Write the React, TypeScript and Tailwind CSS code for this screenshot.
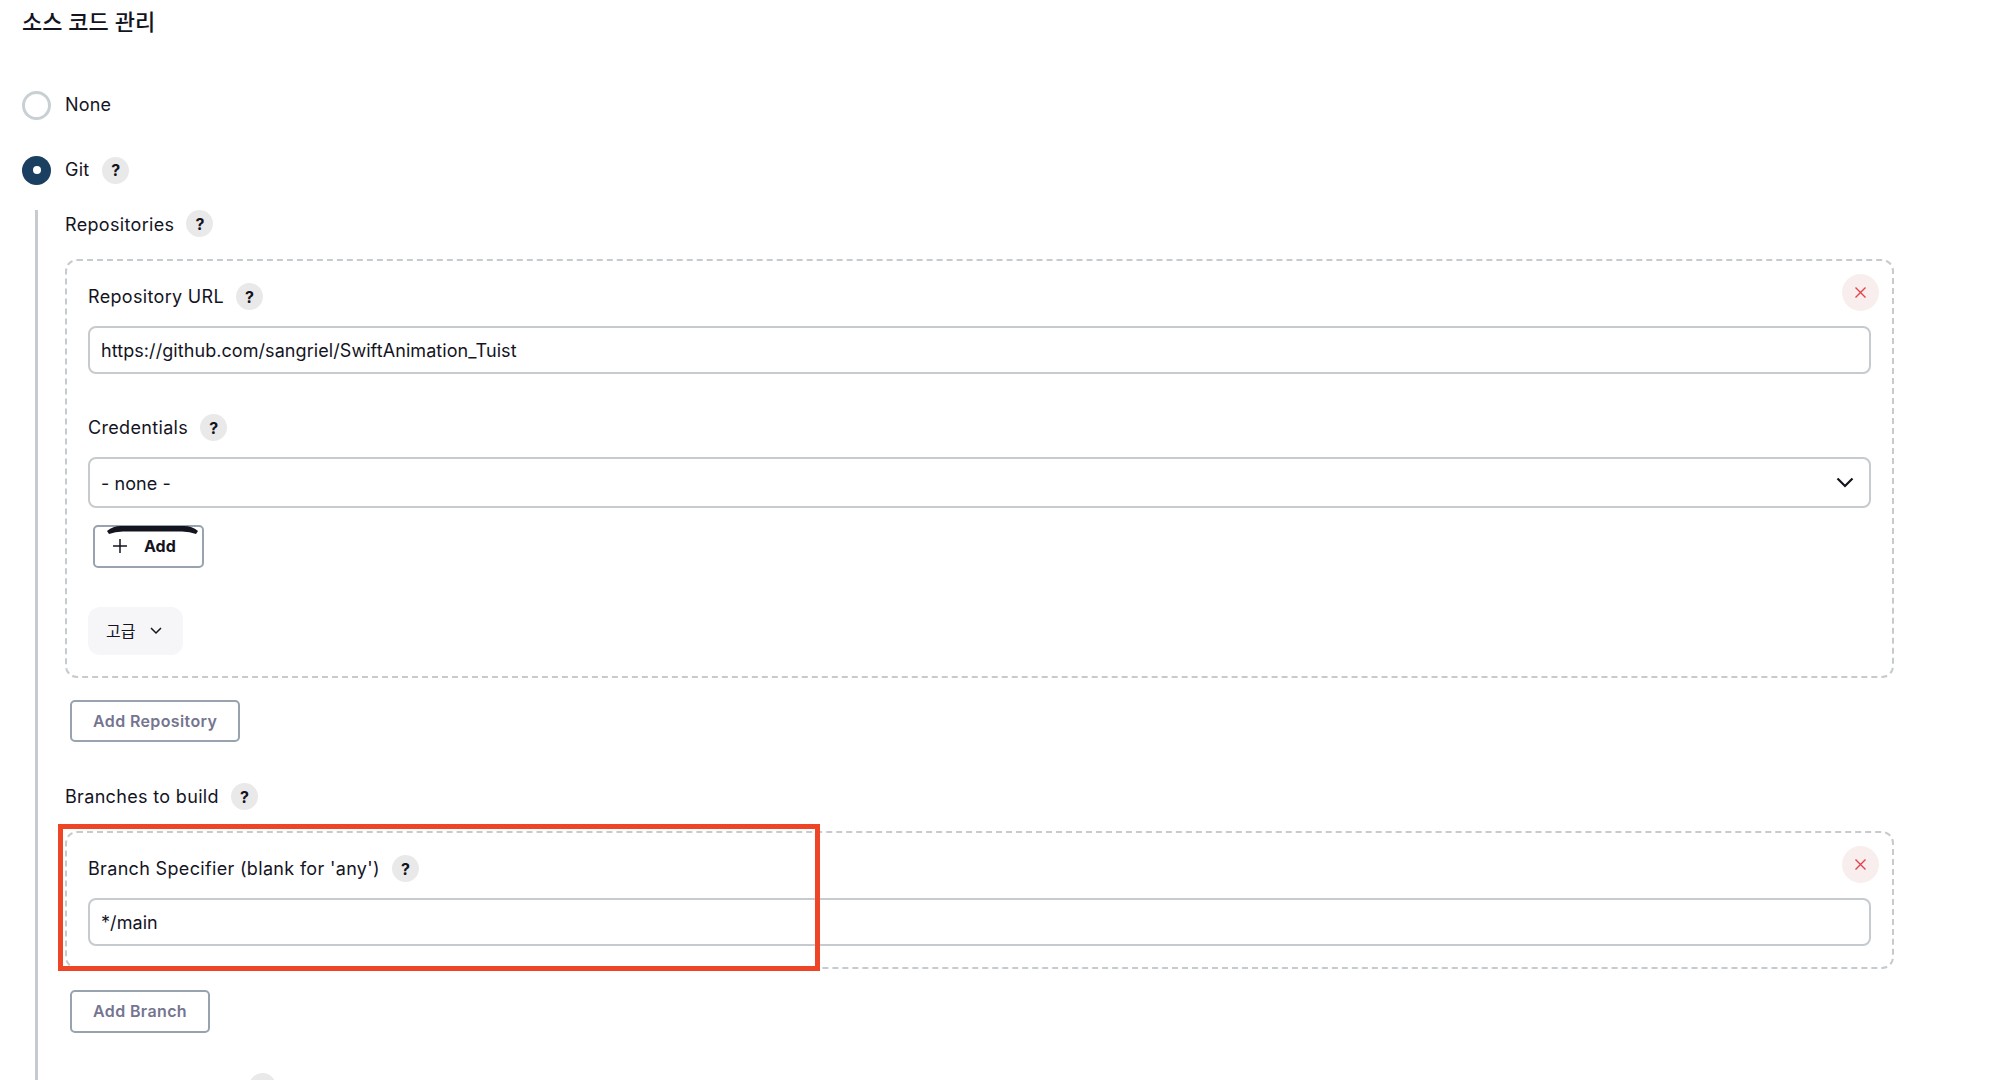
const FONT = "font-['Inter','Noto_Sans_CJK_KR',sans-serif]";

function Help({ className = '' }: { className?: string }) {
  return (
    <span className={`flex h-[27px] w-[27px] shrink-0 items-center justify-center rounded-full bg-[#e9e9ea] text-[16px] font-bold tracking-normal text-[#14141f] ${className}`}>
      ?
    </span>
  );
}

function Label({ text, textClass = '' }: { text: string; textClass?: string }) {
  return (
    <div className="flex h-[27px] items-center gap-[12px] text-[18px] font-[430] tracking-[0.33px] text-[#14141f]">
      <span className={textClass}>{text}</span>
      <Help />
    </div>
  );
}

function TextField({ value }: { value: string }) {
  return (
    <input
      readOnly
      value={value}
      className="mt-4 block h-12 w-full rounded-lg border-2 border-[#c5cbcf] bg-white px-[11px] text-[18px] tracking-[0.07px] text-[#14141f] outline-none"
    />
  );
}

function RemoveButton() {
  return (
    <span className="absolute right-[13px] top-[13px] flex h-[37px] w-[37px] items-center justify-center rounded-full bg-[#f9eeee]">
      <svg width="13" height="13" viewBox="0 0 13 13" fill="none" stroke="#e2434b" strokeWidth="1.4">
        <path d="M1.5 1.5l10 10M11.5 1.5l-10 10" />
      </svg>
    </span>
  );
}

function OutlineButton({ text, height }: { text: string; height: string }) {
  return (
    <div className={`ml-[5px] flex w-fit items-center rounded-[5px] border-2 border-[#97a3ae] px-[21px] pb-[1px] text-[16px] font-semibold tracking-[0.38px] text-[#75758f] ${height}`}>
      {text}
    </div>
  );
}

function Radio({ checked, text, help }: { checked?: boolean; text: string; help?: boolean }) {
  return (
    <div className="flex h-[30px] items-center text-[18px] font-[430] tracking-[0.2px] text-[#14141f]">
      {checked ? (
        <span className="flex h-[29px] w-[29px] items-center justify-center rounded-full bg-[#1a3f60]">
          <span className="h-2 w-2 rounded-full bg-white" />
        </span>
      ) : (
        <span className="h-[29px] w-[29px] rounded-full border-[3px] border-[#c9d0d3]" />
      )}
      <span className="ml-[14px] pb-[2px]">{text}</span>
      {help && <Help className="ml-[13px]" />}
    </div>
  );
}

export default function App() {
  return (
    <div className={`relative h-[1080px] w-[1990px] overflow-hidden bg-white pl-[22px] pr-[96px] ${FONT}`}>
      <h2 className="flex h-11 items-center text-[22px] font-medium text-[#14141f]">소스 코드 관리</h2>

      <div className="mt-[46px]">
        <Radio text="None" />
      </div>
      <div className="mt-[35px]">
        <Radio checked text="Git" help />
      </div>

      <div className="ml-[13px] mt-[25px] border-l-[3px] border-[#c5cbcf] pb-10 pl-[27px]">
        <Label text="Repositories" textClass="pt-[1px]" />

        <div className="relative mt-[22px] rounded-xl border-2 border-dashed border-[#c5cbcf] px-[21px] pb-[21px] pt-[22px]">
          <RemoveButton />
          <Label text="Repository URL" />
          <TextField value="https://github.com/sangriel/SwiftAnimation_Tuist" />

          <div className="mt-10">
            <Label text="Credentials" />
          </div>
          <div className="mt-4 flex h-[51px] items-center justify-between rounded-lg border-2 border-[#c5cbcf] pl-[11px] pr-[15px] text-[18px] tracking-[0.07px] text-[#14141f]">
            <span className="pt-[1px]">- none -</span>
            <svg width="18" height="11" viewBox="0 0 18 11" fill="none" stroke="#14141f" strokeWidth="2.2">
              <path d="M1.5 1.5L9 9l7.5-7.5" />
            </svg>
          </div>

          <div className="relative ml-[5px] mt-[17px] flex h-[43px] w-[111px] items-center rounded-[5px] border-2 border-[#97a3ae] pb-[1px] pl-[18px] text-[16px] font-bold text-[#14141f]">
            <svg width="14" height="14" viewBox="0 0 14 14" fill="none" stroke="#14141f" strokeWidth="1.5">
              <path d="M7 0v14M0 7h14" />
            </svg>
            <span className="ml-[17px]">Add</span>
            <svg className="absolute left-[12px] top-[-1px]" width="91" height="8" viewBox="0 0 91 8" fill="#14141f">
              <path d="M0 5Q6 0 14 0H77Q85 0 91 5L89 8Q83 5.5 75 5.5H16Q8 5.5 2 8Z" />
            </svg>
          </div>

          <div className="mt-[39px] flex h-12 w-fit items-center gap-[15px] rounded-xl bg-[#f6f6f8] pl-[18px] pr-[21px] text-[16px] text-[#14141f]">
            <span>고급</span>
            <svg width="12" height="8" viewBox="0 0 12 8" fill="none" stroke="#14141f" strokeWidth="1.5">
              <path d="M1 1l5 5 5-5" />
            </svg>
          </div>
        </div>

        <div className="mt-[22px]">
          <OutlineButton text="Add Repository" height="h-[42px]" />
        </div>

        <div className="mt-[41px]">
          <Label text="Branches to build" />
        </div>

        <div className="relative mt-[21px] rounded-xl border-2 border-dashed border-[#c5cbcf] px-[21px] pb-[21px] pt-[22px]">
          <RemoveButton />
          <Label text="Branch Specifier (blank for 'any')" />
          <TextField value="*/main" />
        </div>

        <div className="mt-[21px]">
          <OutlineButton text="Add Branch" height="h-[43px]" />
        </div>

        <div className="mt-10">
          <Label text="Repository browser" textClass="pt-[3px]" />
        </div>
      </div>

      {/* annotation drawn over the screenshot */}
      <div className="absolute left-[58px] top-[824px] h-[147px] w-[762px] border-[5px] border-[#ef4527]" />
    </div>
  );
}
